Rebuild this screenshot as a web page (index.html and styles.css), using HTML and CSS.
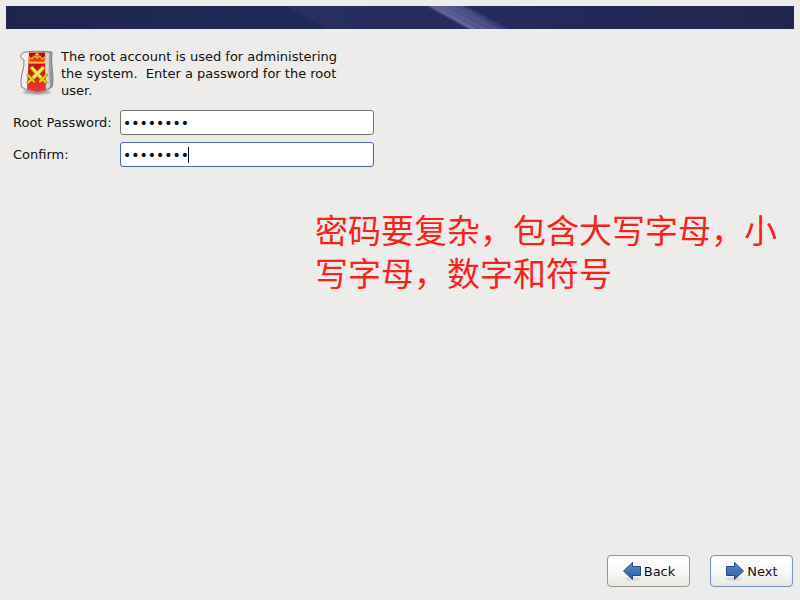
FILE: index.html
```html
<!DOCTYPE html>
<html lang="en">
<head>
<meta charset="utf-8">
<meta name="viewport" content="width=device-width, initial-scale=1">
<title>Root Password</title>
<link rel="stylesheet" href="styles.css">
</head>
<body>
<header class="banner">
  <svg class="banner-art" width="788" height="23" viewBox="0 0 788 23" aria-hidden="true">
    <defs>
      <linearGradient id="glow" x1="0" x2="1"><stop offset="0" stop-color="#343a70" stop-opacity=".4"/><stop offset="1" stop-color="#343a70" stop-opacity=".05"/></linearGradient>
      <linearGradient id="beam" x1="0" x2="1"><stop offset="0" stop-color="#5a5f98"/><stop offset="1" stop-color="#343a70"/></linearGradient>
      <filter id="soft" x="-10%" y="-20%" width="120%" height="140%"><feGaussianBlur stdDeviation=".8"/></filter>
    </defs>
    <path d="M280 0H422L472 23H322Z" fill="url(#glow)"/>
    <g filter="url(#soft)">
      <path d="M421 -1H456L504 24H465Z" fill="url(#beam)"/>
      <path d="M421 -1H424L472 24H467Z" fill="#7377aa"/>
      <path d="M431 -1H433L482 24H478Z" fill="#686da3"/>
      <path d="M440 -1H442L493 24H489Z" fill="#5c6097"/>
    </g>
  </svg>
</header>
<main class="content">
  <div class="intro">
    <svg class="shield" width="36" height="46" viewBox="0 0 36 46" aria-hidden="true">
      <defs>
        <linearGradient id="metal" x1="0" x2="1"><stop offset="0" stop-color="#f4f4f4"/><stop offset=".65" stop-color="#dcdcdc"/><stop offset="1" stop-color="#8c8c90"/></linearGradient>
        <linearGradient id="red" x1="0" y1="0" x2="0" y2="1"><stop offset="0" stop-color="#b00d0d"/><stop offset=".5" stop-color="#d5181c"/><stop offset="1" stop-color="#ec3c3c"/></linearGradient>
        <filter id="shade" x="-20%" y="-40%" width="140%" height="180%"><feGaussianBlur stdDeviation="1"/></filter>
      </defs>
      <ellipse cx="18" cy="42" rx="14" ry="2.500" fill="#777" opacity=".6" filter="url(#shade)"/>
      <path d="M6 2Q17 .5 33 2Q32 12 33.500 22Q34.500 32 33 37Q27 41 18 43.500Q8 41 2.500 37Q1 31 3 24Q5.500 16 5 10Q2 9 1.500 6Q2 3 6 2Z" fill="url(#metal)" stroke="#808084"/>
      <path d="M10 2.500L26 2.500Q26 21 27 40L18 42.500L8 39.500Q9 22 10 2.500Z" fill="url(#red)"/>
      <path d="M26.500 3H30Q29 20 31 37L27 39.500Q26 20 26.500 3Z" fill="#fff" opacity=".45"/>
      <path d="M9.500 6.500L13 9L15 6L18 8L21 6L23 9L26.500 6.500L25.500 13H10.500Z" fill="#e8391a" stroke="#f2b321" stroke-width="1.200" stroke-linejoin="round"/>
      <path d="M18 2.500V8M16 4.500H20M10.500 12.500H25.500" fill="none" stroke="#ffc933" stroke-width="1.300"/>
      <path d="M12 17L24 30M25 17L12 30" stroke="#9a7000" stroke-width="4.500"/>
      <path d="M12 17L24 30M25 17L12 30" stroke="#ecd33a" stroke-width="3.200"/>
      <path d="M12.500 17L24 29M24.500 17L12 30" stroke="#fff59a" stroke-width="1"/>
      <path d="M9 25L15 31.500M27.500 25L21 31.500M13 29L9 32.500M23 29L27 32.500" stroke="#a57a00" stroke-width="3" stroke-linecap="round"/>
      <path d="M9 25L15 31.500M27.500 25L21 31.500M13 29L9 32.500M23 29L27 32.500" stroke="#f0cd22" stroke-width="1.800" stroke-linecap="round"/>
    </svg>
    <p class="intro-text">The root account is used for administering the system.&nbsp; Enter a password for the root user.</p>
  </div>
  <form class="fields" id="password-form">
    <label for="root-password">Root Password:</label>
    <input class="entry" id="root-password" type="password" value="password" autocomplete="off">
    <label for="confirm">Confirm:</label>
    <input class="entry entry-active" id="confirm" type="password" value="password" autocomplete="off">
  </form>
  <p class="note" lang="zh-CN">密码要复杂，包含大写字母，小写字母，数字和符号</p>
</main>
<footer class="actions">
  <button class="button" type="button">
    <svg class="arrow" width="20" height="22" viewBox="0 0 20 22" aria-hidden="true">
      <defs><linearGradient id="blue" x1="0" y1="0" x2="0" y2="1"><stop offset="0" stop-color="#5b8dcc"/><stop offset="1" stop-color="#285b9f"/></linearGradient></defs>
      <ellipse cx="11" cy="19" rx="8" ry="2" fill="#aaa" opacity=".3"/>
      <path d="M1.500 11L10.500 2.500V6.500H18.500V15.500H10.500V19.500Z" fill="url(#blue)" stroke="#244b7e" stroke-linejoin="round"/>
    </svg>
    Back
  </button>
  <button class="button button-default" type="submit" form="password-form">
    <svg class="arrow" width="20" height="22" viewBox="0 0 20 22" aria-hidden="true">
      <ellipse cx="9" cy="19" rx="8" ry="2" fill="#aaa" opacity=".3"/>
      <path d="M18.500 11L9.500 2.500V6.500H1.500V15.500H9.500V19.500Z" fill="url(#blue)" stroke="#244b7e" stroke-linejoin="round"/>
    </svg>
    Next
  </button>
</footer>
</body>
</html>
```
FILE: styles.css
```css
* {
  box-sizing: border-box;
}

body {
  display: flex;
  flex-direction: column;
  min-height: 100vh;
  margin: 0;
  padding: 6px 6px 13px;
  background: #edecea;
  color: #111;
  font: 13px/17px "DejaVu Sans", sans-serif;
}

p {
  margin: 0;
}

.banner {
  height: 23px;
  overflow: hidden;
  background: linear-gradient(90deg, #1d254f, #212957 40%, #252b5b 60%, #20264f);
}

.banner-art {
  display: block;
}

.content {
  flex: 1;
  padding: 19px 7px 0;
}

.intro {
  display: flex;
  gap: 6px;
  padding-left: 6px;
}

.shield {
  flex: none;
  margin-top: 2px;
}

.intro-text {
  max-width: 288px;
}

.fields {
  display: grid;
  grid-template-columns: 100px minmax(0, 254px);
  gap: 7px;
  align-items: center;
  margin-top: 11px;
}

.fields label {
  white-space: nowrap;
}

.entry {
  width: 100%;
  height: 25px;
  padding: 0 2px;
  border: 1px solid #77736e;
  border-radius: 3px;
  outline: none;
  background: #fff;
  color: #111;
  font: 14px/17px "DejaVu Sans", sans-serif;
}

.entry-active {
  border-color: #4a6c9f;
  box-shadow: inset 0 0 1px #9ab5dc;
  background: linear-gradient(#111, #111) 67px center / 1px 16px no-repeat #fff;
}

.note {
  margin: 41px 0 0 302px;
  color: #f9221a;
  font: 400 33px/43px "Noto Sans CJK SC", sans-serif;
}

.actions {
  display: flex;
  justify-content: flex-end;
  gap: 20px;
  padding-right: 1px;
}

.button {
  display: flex;
  align-items: center;
  justify-content: center;
  gap: 2px;
  width: 83px;
  height: 32px;
  padding: 0;
  border: 1px solid #99958f;
  border-radius: 4px;
  background: linear-gradient(#fff, #f9f9f8 50%, #e9e8e6);
  color: #111;
  font: inherit;
}

.button-default {
  border-color: #7593bd;
  box-shadow: inset 0 0 1px #9eb7da;
}

.arrow {
  flex: none;
}
```
